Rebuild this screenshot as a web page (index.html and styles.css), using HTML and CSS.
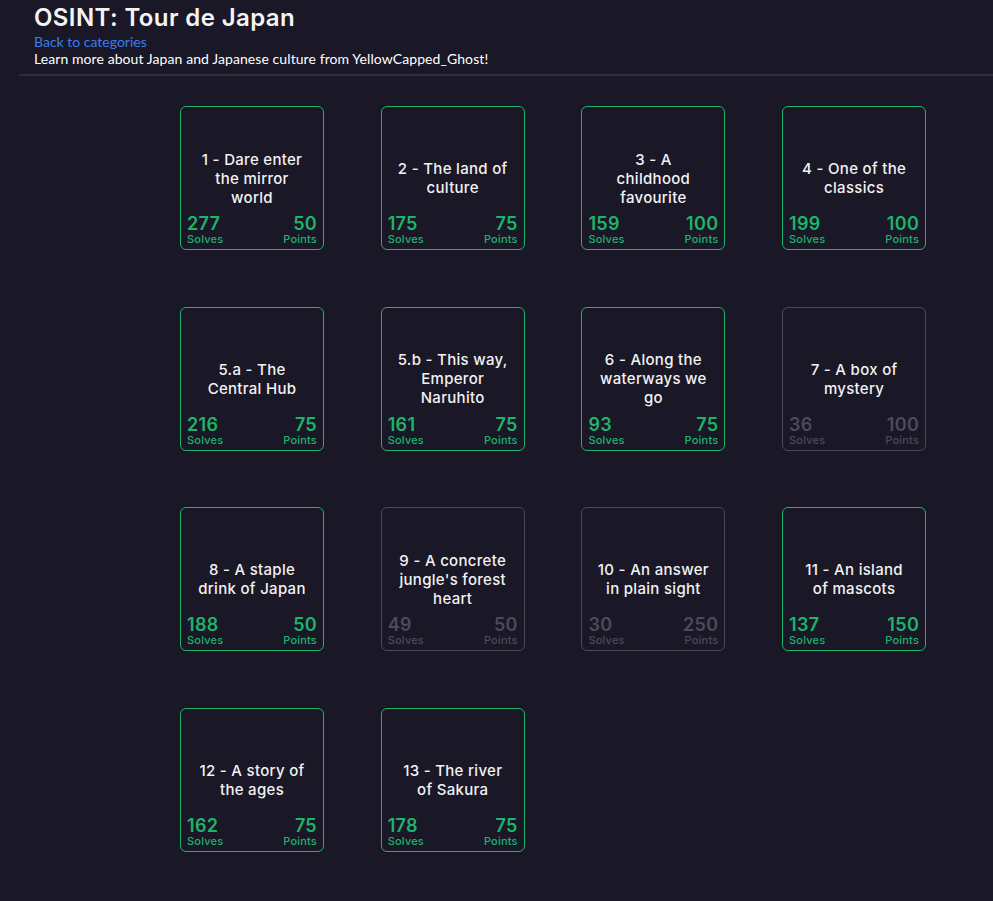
FILE: index.html
```html
<!DOCTYPE html>
<html>
<head>
<meta charset="utf-8">
<link rel="stylesheet" href="styles.css">
</head>
<body>
<header class="head">
  <h1 class="title">OSINT: Tour de Japan</h1>
  <a class="back" href="#">Back to categories</a>
  <p class="desc">Learn more about Japan and Japanese culture from YellowCapped_Ghost!</p>
</header>
<hr class="rule">
<main class="grid">
  <div class="card"><div class="name">1 - Dare enter the mirror world</div><div class="stats"><div class="stat"><span class="num">277</span><span class="lbl">Solves</span></div><div class="stat right"><span class="num">50</span><span class="lbl">Points</span></div></div></div>
  <div class="card"><div class="name">2 - The land of culture</div><div class="stats"><div class="stat"><span class="num">175</span><span class="lbl">Solves</span></div><div class="stat right"><span class="num">75</span><span class="lbl">Points</span></div></div></div>
  <div class="card"><div class="name">3 - A<br>childhood favourite</div><div class="stats"><div class="stat"><span class="num">159</span><span class="lbl">Solves</span></div><div class="stat right"><span class="num">100</span><span class="lbl">Points</span></div></div></div>
  <div class="card"><div class="name">4 - One of the classics</div><div class="stats"><div class="stat"><span class="num">199</span><span class="lbl">Solves</span></div><div class="stat right"><span class="num">100</span><span class="lbl">Points</span></div></div></div>

  <div class="card"><div class="name">5.a - The Central Hub</div><div class="stats"><div class="stat"><span class="num">216</span><span class="lbl">Solves</span></div><div class="stat right"><span class="num">75</span><span class="lbl">Points</span></div></div></div>
  <div class="card"><div class="name">5.b - This way, Emperor Naruhito</div><div class="stats"><div class="stat"><span class="num">161</span><span class="lbl">Solves</span></div><div class="stat right"><span class="num">75</span><span class="lbl">Points</span></div></div></div>
  <div class="card"><div class="name">6 - Along the waterways we go</div><div class="stats"><div class="stat"><span class="num">93</span><span class="lbl">Solves</span></div><div class="stat right"><span class="num">75</span><span class="lbl">Points</span></div></div></div>
  <div class="card dim"><div class="name">7 - A box of mystery</div><div class="stats"><div class="stat"><span class="num">36</span><span class="lbl">Solves</span></div><div class="stat right"><span class="num">100</span><span class="lbl">Points</span></div></div></div>

  <div class="card"><div class="name">8 - A staple drink of Japan</div><div class="stats"><div class="stat"><span class="num">188</span><span class="lbl">Solves</span></div><div class="stat right"><span class="num">50</span><span class="lbl">Points</span></div></div></div>
  <div class="card dim"><div class="name">9 - A concrete jungle's forest heart</div><div class="stats"><div class="stat"><span class="num">49</span><span class="lbl">Solves</span></div><div class="stat right"><span class="num">50</span><span class="lbl">Points</span></div></div></div>
  <div class="card dim"><div class="name">10 - An answer in plain sight</div><div class="stats"><div class="stat"><span class="num">30</span><span class="lbl">Solves</span></div><div class="stat right"><span class="num">250</span><span class="lbl">Points</span></div></div></div>
  <div class="card"><div class="name">11 - An island of mascots</div><div class="stats"><div class="stat"><span class="num">137</span><span class="lbl">Solves</span></div><div class="stat right"><span class="num">150</span><span class="lbl">Points</span></div></div></div>

  <div class="card"><div class="name">12 - A story of the ages</div><div class="stats"><div class="stat"><span class="num">162</span><span class="lbl">Solves</span></div><div class="stat right"><span class="num">75</span><span class="lbl">Points</span></div></div></div>
  <div class="card"><div class="name">13 - The river of Sakura</div><div class="stats"><div class="stat"><span class="num">178</span><span class="lbl">Solves</span></div><div class="stat right"><span class="num">75</span><span class="lbl">Points</span></div></div></div>
</main>
</body>
</html>
```
FILE: styles.css
```css
html, body {
  margin: 0;
  padding: 0;
  background: #1a1727;
  color: #f2f2f2;
  min-height: 100%;
}
body {
  font-family: Lato, "Liberation Sans", sans-serif;
  height: 901px;
  overflow: hidden;
}
.head {
  padding: 4px 0 0 34px;
}
.title {
  margin: 0;
  font-family: Inter, "Liberation Sans", sans-serif;
  font-weight: 600;
  font-size: 24px;
  line-height: 28px;
  letter-spacing: 0.4px;
  color: #f4f4f4;
}
.back {
  display: block;
  margin-top: 1px;
  font-size: 14px;
  line-height: 17px;
  color: #3b7df2;
  text-decoration: none;
}
.desc {
  margin: 0;
  font-size: 14px;
  line-height: 17px;
  letter-spacing: 0.08px;
  color: #ffffff;
}
.rule {
  margin: 7px 0 0 19px;
  border: 0;
  height: 2px;
  background: #302d3d;
}
.grid {
  display: grid;
  grid-template-columns: repeat(4, 144px);
  column-gap: 56.7px;
  row-gap: 56.7px;
  padding: 30px 0 0 180px;
}
.card {
  box-sizing: border-box;
  width: 144px;
  height: 144px;
  border: 1px solid #1db46c;
  border-radius: 6px;
  display: flex;
  flex-direction: column;
  position: relative;
  font-family: Inter, "Liberation Sans", sans-serif;
}
.name {
  flex: 1;
  display: flex;
  align-items: center;
  justify-content: center;
  text-align: center;
  padding: 0 15px;
  font-size: 15px;
  line-height: 19px;
  letter-spacing: 0.3px;
  font-weight: 500;
  color: #f2f2f2;
}
.stats {
  position: absolute;
  left: 6px;
  right: 6px;
  bottom: 4px;
  display: flex;
  justify-content: space-between;
  color: #1db46c;
}
.stat {
  display: flex;
  flex-direction: column;
  align-items: flex-start;
}
.stat.right {
  align-items: flex-end;
}
.num {
  font-size: 18px;
  line-height: 18px;
  font-weight: 600;
  letter-spacing: 0.3px;
}
.lbl {
  font-size: 11px;
  line-height: 12px;
  font-weight: 500;
  letter-spacing: 0.2px;
}
.card.dim {
  border-color: #4a4757;
}
.card.dim .stats {
  color: #4d4a5b;
}
```
